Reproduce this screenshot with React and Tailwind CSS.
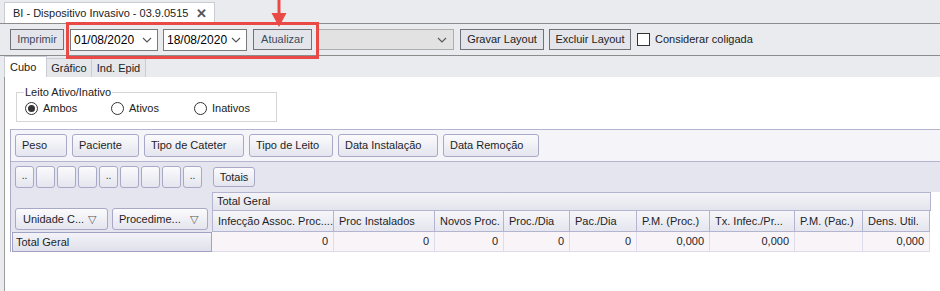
import React from "react";

const cols = [
  { label: "Infecção Assoc. Proc....", w: "w-[122px]", v: "0" },
  { label: "Proc Instalados", w: "w-[101px]", v: "0" },
  { label: "Novos Proc.", w: "w-[69px]", v: "0" },
  { label: "Proc./Dia", w: "w-[66px]", v: "0" },
  { label: "Pac./Dia", w: "w-[67px]", v: "0" },
  { label: "P.M. (Proc.)", w: "w-[73px]", v: "0,000" },
  { label: "Tx. Infec./Pr...", w: "w-[85px]", v: "0,000" },
  { label: "P.M. (Pac.)", w: "w-[68px]", v: "" },
  { label: "Dens. Util.", w: "w-[67px]", v: "0,000" },
];

const fields = [
  { label: "Peso", w: "w-[52px]" },
  { label: "Paciente", w: "w-[67px]" },
  { label: "Tipo de Cateter", w: "w-[100px]" },
  { label: "Tipo de Leito", w: "w-[84px]" },
  { label: "Data Instalação", w: "w-[100px]" },
  { label: "Data Remoção", w: "w-[96px]" },
];

const dots = ["..", "", "", "", "..", "", "", "", ".."];

function Chevron() {
  return (
    <svg width="10" height="6" viewBox="0 0 10 6" className="shrink-0">
      <path d="M1 1 L5 5 L9 1" fill="none" stroke="#555" strokeWidth="1.1" />
    </svg>
  );
}

function PivotBtn({ children, className = "" }) {
  return (
    <div
      className={`flex items-center rounded-[3px] border border-[#a7a9c6] bg-gradient-to-b from-[#fbfbfd] to-[#e4e5ee] text-[#1e1e28] whitespace-nowrap ${className}`}
    >
      {children}
    </div>
  );
}

function Radio({ checked, label }) {
  return (
    <div className="flex items-center gap-[5px]">
      <div className="w-[13px] h-[13px] rounded-full border border-[#333] bg-white flex items-center justify-center">
        {checked && <div className="w-[7px] h-[7px] rounded-full bg-[#333]" />}
      </div>
      <span className="text-[#222]">{label}</span>
    </div>
  );
}

export default function App() {
  return (
    <div
      className="w-[940px] h-[291px] overflow-hidden bg-[#e9ebef] relative text-[11px] leading-none"
      style={{ fontFamily: '"Liberation Sans", Arial, sans-serif' }}
    >
      {/* document tab strip */}
      <div className="h-[23px] flex items-end pl-[4px]">
        <div className="h-[21px] w-[211px] bg-white border border-b-0 border-[#c9ccd2] flex items-center justify-between pl-[8px] pr-[7px] text-[11px] text-[#222] whitespace-nowrap">
          <span>BI - Dispositivo Invasivo - 03.9.0515</span>
          <span className="font-bold text-[#555] text-[13px]">✕</span>
        </div>
      </div>

      {/* toolbar */}
      <div className="h-[33px] border-y border-[#8c8c8c] flex items-center pl-[10px] gap-[6px] text-[#333] whitespace-nowrap">
        <div className="w-[54px] h-[21px] border border-[#6f7279] bg-[#e3e5ea] flex items-center justify-center text-[#3d4a5c]">
          Imprimir
        </div>
        <div className="w-[88px] h-[22px] border border-[#7a7a7a] bg-white flex items-center justify-between pl-[3px] pr-[5px] text-[12px] text-black">
          <span>01/08/2020</span>
          <Chevron />
        </div>
        <div className="w-[84px] h-[22px] border border-[#7a7a7a] bg-white flex items-center justify-between pl-[3px] pr-[5px] text-[12px] text-black ml-[-1px]">
          <span>18/08/2020</span>
          <Chevron />
        </div>
        <div className="w-[59px] h-[21px] border border-[#6f7279] bg-[#e3e5ea] flex items-center justify-center text-[#3d4a5c]">
          Atualizar
        </div>
        <div className="w-[136px] h-[21px] border border-[#adadad] bg-[#e2e2e2] flex items-center justify-end pr-[6px]">
          <Chevron />
        </div>
        <div className="w-[84px] h-[21px] border border-[#6f7279] bg-[#e3e5ea] flex items-center justify-center text-[#222]">
          Gravar Layout
        </div>
        <div className="w-[82px] h-[21px] border border-[#6f7279] bg-[#e3e5ea] flex items-center justify-center text-[#222] ml-[-1px]">
          Excluir Layout
        </div>
        <div className="w-[13px] h-[13px] border border-[#333] bg-white" />
        <span className="text-[#222] ml-[-1px]">Considerar coligada</span>
      </div>

      {/* page tabs */}
      <div className="h-[21px] flex items-end pl-[4px] text-[#222]">
        <div className="h-[21px] w-[43px] bg-white border border-b-0 border-[#c9ccd2] flex items-center pl-[5px]">
          Cubo
        </div>
        <div className="h-[19px] w-[45px] bg-[#e5e7eb] border border-b-0 border-l-0 border-[#c9ccd2] flex items-center justify-center">
          Gráfico
        </div>
        <div className="h-[19px] w-[54px] bg-[#e5e7eb] border border-b-0 border-l-0 border-[#c9ccd2] flex items-center justify-center">
          Ind. Epid
        </div>
      </div>

      {/* content panel */}
      <div className="ml-[4px] h-[214px] bg-white border-l border-[#9c9c9c]">
        {/* group box */}
        <div className="pt-[15px] pl-[11px]">
          <div className="relative w-[261px] h-[30px] border border-[#d5d5d5]">
            <span className="absolute left-[7px] top-[-6px] bg-white px-[1px] text-[#222]">
              Leito Ativo/Inativo
            </span>
            <div className="flex items-center pt-[9px] pl-[8px]">
              <div className="w-[86px]">
                <Radio checked label="Ambos" />
              </div>
              <div className="w-[83px]">
                <Radio label="Ativos" />
              </div>
              <Radio label="Inativos" />
            </div>
          </div>
        </div>

        {/* pivot grid */}
        <div className="mt-[7px] ml-[5px] border-l border-[#a8aac8]">
          {/* filter area */}
          <div className="h-[33px] bg-[#f4f4f9] border-y border-[#b3b5d0] flex items-center pl-[4px] gap-[5px]">
            {fields.map((f) => (
              <PivotBtn key={f.label} className={`${f.w} h-[23px] pl-[6px]`}>
                {f.label}
              </PivotBtn>
            ))}
          </div>

          {/* data / column area */}
          <div className="h-[30px] bg-[#e4e5ef] flex items-center pl-[4px]">
            <div className="flex gap-[2px]">
              {dots.map((d, i) => (
                <PivotBtn key={i} className="w-[19px] h-[22px] justify-center items-end pb-[6px] text-[10px]">
                  {d}
                </PivotBtn>
              ))}
            </div>
            <PivotBtn className="ml-[11px] w-[42px] h-[20px] justify-center">Totais</PivotBtn>
          </div>

          {/* headers */}
          <div className="flex h-[40px]">
            <div className="w-[201px] bg-[#e4e5ef] flex items-end pb-[2px] pl-[4px] gap-[4px]">
              <PivotBtn className="w-[93px] h-[22px] pl-[7px] gap-[4px]">
                <span>Unidade C...</span>
                <span className="text-[11px] text-[#555]">▽</span>
              </PivotBtn>
              <PivotBtn className="w-[96px] h-[22px] pl-[6px] gap-[9px]">
                <span>Procedime...</span>
                <span className="text-[11px] text-[#555]">▽</span>
              </PivotBtn>
            </div>
            <div className="flex flex-col">
              <div className="h-[19px] w-[719px] border border-[#b3b5d0] bg-gradient-to-b from-[#f4f4f8] to-[#e3e4ec] flex items-center pl-[4px] text-[#1e1e28]">
                Total Geral
              </div>
              <div className="flex h-[21px]">
                {cols.map((c) => (
                  <div
                    key={c.label}
                    className={`${c.w} border-b border-r border-[#b3b5d0] first:border-l bg-gradient-to-b from-[#f6f6fa] to-[#e5e6ee] flex items-center pl-[5px] text-[#1e1e28] whitespace-nowrap overflow-hidden`}
                  >
                    {c.label}
                  </div>
                ))}
              </div>
            </div>
            <div className="flex-1 bg-white" />
          </div>

          {/* data row */}
          <div className="flex h-[20px]">
            <div className="w-[200px] ml-[1px] border border-[#9fa2c4] bg-gradient-to-b from-[#f3f3f8] to-[#dfe0ea] flex items-center pl-[3px] text-[#1e1e28]">
              Total Geral
            </div>
            {cols.map((c) => (
              <div
                key={c.label}
                className={`${c.w} border-b border-r border-[#dcdcec] bg-[#f8f4f8] flex items-center justify-end pr-[5px] text-[#1e1e28]`}
              >
                {c.v}
              </div>
            ))}
          </div>
        </div>
      </div>

      {/* annotation */}
      <div className="absolute left-[66px] top-[22px] w-[253px] h-[37px] border-[3px] border-[#ea4a45]" />
      <svg className="absolute left-[271px] top-0" width="16" height="28" viewBox="0 0 16 28">
        <path d="M8 0 V14" stroke="#ea4a45" strokeWidth="3" />
        <path d="M0.5 13 L15.5 13 L8 27 Z" fill="#ea4a45" />
      </svg>
    </div>
  );
}
